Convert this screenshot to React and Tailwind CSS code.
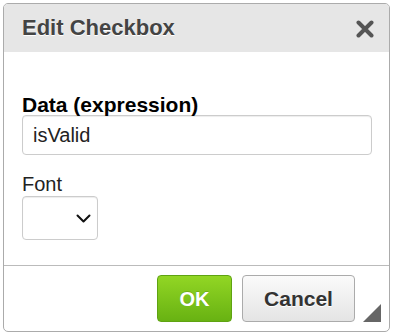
export default function App() {
  const font = { fontFamily: '"Liberation Sans", Arial, sans-serif' };
  return (
    <div className="w-[393px] h-[334px] bg-white p-[3px]" style={font}>
      <div className="relative w-[387px] h-[329px] border border-[#ababab] rounded-[5px] overflow-hidden flex flex-col bg-white">
        <div className="h-[48px] shrink-0 bg-[#e6e6e6] flex items-start justify-between pl-[18px] pr-[15px] pt-[13px]">
          <span className="text-[22px] leading-none font-bold text-[#444] [text-shadow:0_1px_0_#fff]">Edit Checkbox</span>
          <svg width="18" height="18" viewBox="0 0 18 18" className="mt-[3px]">
            <path d="M2.5 2.5 L15.5 15.5 M15.5 2.5 L2.5 15.5" stroke="#555" strokeWidth="4" strokeLinecap="round" />
          </svg>
        </div>
        <div className="h-[213px] shrink-0 pl-[18px] pt-[42px]">
          <div className="text-[21px] leading-none font-bold text-black">Data (expression)</div>
          <div className="w-[350px] h-[40px] border border-[#cccccc] rounded-[4px] flex items-center pl-[10px] text-[20px] text-[#222] shadow-[inset_0_1px_1px_rgba(0,0,0,0.075)]">
            isValid
          </div>
          <div className="mt-[19px] text-[20px] leading-none text-[#222]">Font</div>
          <div className="mt-[2px] w-[76px] h-[44px] border border-[#cccccc] rounded-[4px] flex items-center justify-end pr-[6px] shadow-[inset_0_1px_1px_rgba(0,0,0,0.075)]">
            <svg width="15" height="9" viewBox="0 0 15 9">
              <path d="M1.5 1.5 L7.5 7.5 L13.5 1.5" stroke="#111" strokeWidth="2" fill="none" strokeLinecap="round" strokeLinejoin="round" />
            </svg>
          </div>
        </div>
        <div className="flex-1 border-t border-[#bbbbbb] flex justify-end items-start gap-[10px] pt-[9px] pr-[34px]">
          <div className="w-[75px] h-[47px] rounded-[4px] border border-[#5fa312] bg-gradient-to-b from-[#92d624] to-[#68b212] flex items-center justify-center text-white font-bold text-[20px] [text-shadow:0_-1px_0_rgba(0,0,0,0.15)]">
            OK
          </div>
          <div className="w-[113px] h-[47px] rounded-[4px] border border-[#ababab] bg-gradient-to-b from-[#fbfbfb] to-[#e4e4e4] flex items-center justify-center text-[#333] font-bold text-[21px] [text-shadow:0_1px_0_#fff]">
            Cancel
          </div>
        </div>
        <svg width="18" height="18" viewBox="0 0 18 18" className="absolute right-[8px] bottom-[9px]">
          <path d="M18 0 L18 18 L0 18 Z" fill="#666" />
        </svg>
      </div>
    </div>
  );
}
